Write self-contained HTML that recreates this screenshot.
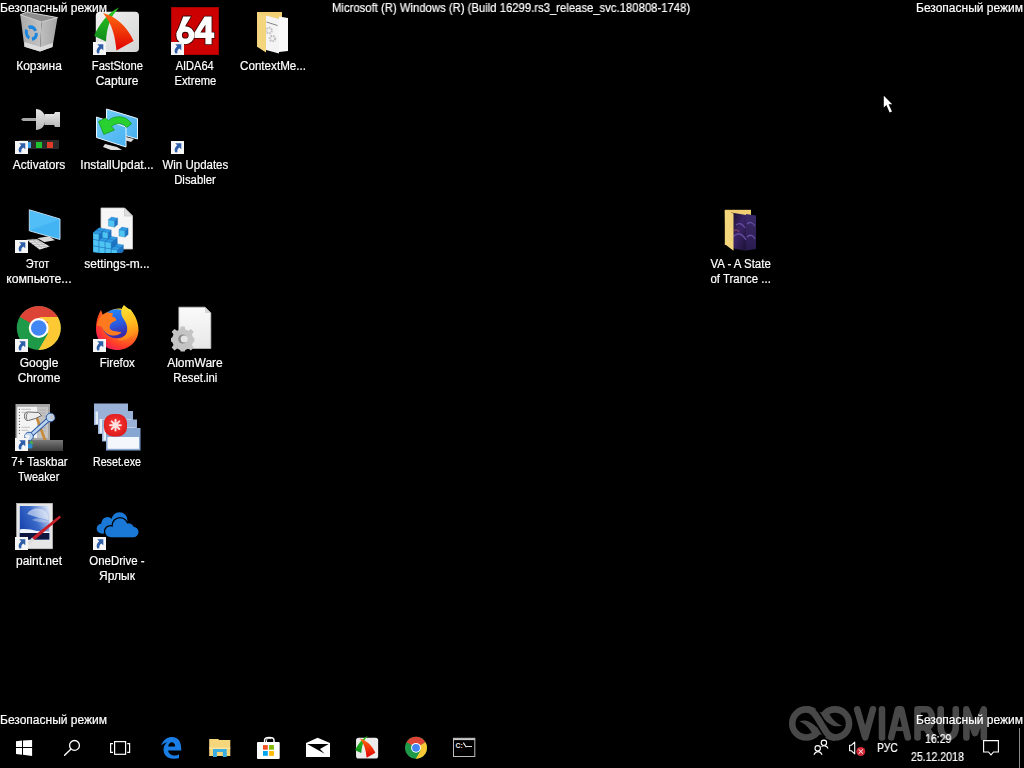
<!DOCTYPE html>
<html><head><meta charset="utf-8">
<style>
html,body{margin:0;padding:0;background:#000;width:1024px;height:768px;overflow:hidden;}
body{position:relative;font-family:"Liberation Sans",sans-serif;font-size:12px;color:#fff;-webkit-font-smoothing:antialiased;}
.t{position:absolute;white-space:pre;line-height:15px;will-change:transform;-webkit-text-stroke:0.2px #fff;}
.lbl{position:absolute;width:76px;text-align:center;line-height:15px;white-space:nowrap;will-change:transform;-webkit-text-stroke:0.2px #fff;}
.ic{position:absolute;width:48px;height:48px;}
.ov{position:absolute;width:13px;height:13px;}
svg{display:block;}
</style></head><body>
<div class="ic" style="left:15px;top:7px"><svg width="48" height="48" viewBox="0 0 48 48">
<defs><linearGradient id="rbL" x1="0" y1="0" x2="1" y2="0"><stop offset="0" stop-color="#a9a9a9"/><stop offset="1" stop-color="#c4c4c4"/></linearGradient>
<linearGradient id="rbR" x1="0" y1="0" x2="1" y2="0"><stop offset="0" stop-color="#c0c0c0"/><stop offset="1" stop-color="#a4a4a4"/></linearGradient></defs>
<polygon points="5.3,7.8 26.5,15 25,44.4 9.4,39.7" fill="url(#rbL)"/>
<polygon points="26.5,15 42.5,10.6 37.5,40 25,44.4" fill="url(#rbR)"/>
<polygon points="9.5,35 25.5,40 37.8,36 37.5,40 25,44.4 9.4,39.7" fill="#dcdcdc"/>
<polygon points="5.3,7.8 12,5 42.5,10.6 26.5,15" fill="#8c8c8c" stroke="#d6d6d6" stroke-width="1"/>
<g transform="translate(16.3,26) rotate(-20) scale(0.9,1.12)"><circle cx="0" cy="0" r="5.4" fill="none" stroke="#1a86e0" stroke-width="3.2" stroke-dasharray="8.5 2.8" transform="rotate(15)"/></g>
</svg></div>
<div class="ic" style="left:93px;top:7px"><svg width="48" height="48" viewBox="0 0 48 48">
<defs><linearGradient id="fsBg" x1="0" y1="0" x2="1" y2="1"><stop offset="0" stop-color="#f2f2f2"/><stop offset="1" stop-color="#d4d4d4"/></linearGradient>
<linearGradient id="fsR" x1="0" y1="0" x2="0" y2="1"><stop offset="0" stop-color="#ff6a10"/><stop offset="1" stop-color="#e00000"/></linearGradient>
<linearGradient id="fsG" x1="0" y1="0" x2="0" y2="1"><stop offset="0" stop-color="#2ecc20"/><stop offset="1" stop-color="#0f8a1c"/></linearGradient></defs>
<rect x="2.8" y="4.7" width="43.2" height="40.3" rx="4" fill="url(#fsBg)"/>
<path d="M26 0.5 C15 6 6 17 1.2 29 L13 34.5 C13.5 24 16 15 20 8 Z" fill="url(#fsG)"/>
<path d="M10 6 C22 9 34 19 40.6 34 L23.5 43.5 C22 30 20 18 10 6 Z" fill="url(#fsR)"/>
</svg></div>
<div class="ov" style="left:93px;top:42px"><svg width="13" height="13" viewBox="0 0 13 13"><rect x="0" y="0" width="13" height="13" fill="#f6f6f6"/><path d="M4.2 2.2 L10.3 2.2 L10.3 8.3 L8.3 6.4 C6.6 7.6 6 9.2 6.4 11.3 L4.6 11.6 C3.1 9.6 3.3 6.9 6.2 4.2 Z" fill="#2e5ea8"/></svg></div>
<div class="ic" style="left:171px;top:7px"><svg width="48" height="48" viewBox="0 0 48 48">
<rect x="0" y="0" width="48" height="48" fill="#cc0000"/>
<rect x="0.5" y="0.5" width="47" height="47" fill="none" stroke="#a80000"/>
<g stroke="#3a0000" stroke-width="1.6" stroke-linejoin="round">
<circle cx="14.3" cy="28.2" r="6.2" fill="none" stroke-width="7.4"/>
<polygon points="12.2,9.4 19.9,9.4 12.8,21.5 5.3,27.5" fill="#3a0000"/>
<path fill="#3a0000" fill-rule="evenodd" d="M33.5 9.6 L40.6 9.6 L40.6 25.5 L43.3 25.5 L43.3 30.9 L40.6 30.9 L40.6 37.2 L34.4 37.2 L34.4 30.9 L23.4 30.9 L23.4 25.7 Z M34.4 17.8 L34.4 25.5 L29.4 25.5 Z"/>
</g>
<circle cx="14.3" cy="28.2" r="6.2" fill="none" stroke="#fff" stroke-width="5.6"/>
<polygon points="12.2,9.4 19.9,9.4 12.8,21.5 5.3,27.5" fill="#fff"/>
<path fill="#fff" fill-rule="evenodd" d="M33.5 9.6 L40.6 9.6 L40.6 25.5 L43.3 25.5 L43.3 30.9 L40.6 30.9 L40.6 37.2 L34.4 37.2 L34.4 30.9 L23.4 30.9 L23.4 25.7 Z M34.4 17.8 L34.4 25.5 L29.4 25.5 Z"/>
</svg></div>
<div class="ov" style="left:171px;top:42px"><svg width="13" height="13" viewBox="0 0 13 13"><rect x="0" y="0" width="13" height="13" fill="#f6f6f6"/><path d="M4.2 2.2 L10.3 2.2 L10.3 8.3 L8.3 6.4 C6.6 7.6 6 9.2 6.4 11.3 L4.6 11.6 C3.1 9.6 3.3 6.9 6.2 4.2 Z" fill="#2e5ea8"/></svg></div>
<div class="ic" style="left:249px;top:7px"><svg width="48" height="48" viewBox="0 0 48 48">
<polygon points="8,5 33,5 33,40 8,40" fill="#f1cf72"/>
<polygon points="17,8.5 30,12 30,46.5 17,43" fill="#f4f4f4"/>
<polygon points="30,9.5 39,11 39,44 30,45" fill="#fafafa"/>
<path d="M17.5 15 L28.5 18.5" stroke="#666" stroke-width="0.8"/>
<circle cx="20" cy="23.5" r="2.8" fill="none" stroke="#c6c6c6" stroke-width="2.2" stroke-dasharray="1.6 0.9"/>
<circle cx="23.5" cy="31.5" r="2.6" fill="none" stroke="#c0c0c0" stroke-width="2.2" stroke-dasharray="1.6 0.9"/>
<polygon points="8,5.5 17,9 17,45.6 8.5,40" fill="#f3d57e"/>
</svg></div>
<div class="ic" style="left:15px;top:106px"><svg width="48" height="48" viewBox="0 0 48 48">
<defs><linearGradient id="pinG" x1="0" y1="0" x2="0" y2="1"><stop offset="0" stop-color="#e6e6e6"/><stop offset="1" stop-color="#b8b8b8"/></linearGradient></defs>
<polygon points="6,13.5 8,12 21,12 21,15 8,15" fill="#a8a8a8"/>
<path d="M21 3 C26 3 30 7 30 12 L30 15 C30 20 26 24 21 24 Z" fill="url(#pinG)"/>
<rect x="29.5" y="8" width="11" height="11" fill="url(#pinG)"/>
<path d="M39 8 L40 6 L45 6 L45 21 L40 21 L39 19 Z" fill="url(#pinG)"/>
<rect x="4" y="34" width="40" height="9" fill="#2a2a2a"/>
<rect x="13" y="36" width="3" height="6" fill="#3aa0e8"/>
<rect x="21" y="36" width="6" height="6" fill="#20c030"/>
<rect x="32" y="36" width="6" height="6" fill="#e03a2a"/>
</svg></div>
<div class="ov" style="left:15px;top:141px"><svg width="13" height="13" viewBox="0 0 13 13"><rect x="0" y="0" width="13" height="13" fill="#f6f6f6"/><path d="M4.2 2.2 L10.3 2.2 L10.3 8.3 L8.3 6.4 C6.6 7.6 6 9.2 6.4 11.3 L4.6 11.6 C3.1 9.6 3.3 6.9 6.2 4.2 Z" fill="#2e5ea8"/></svg></div>
<div class="ic" style="left:93px;top:106px"><svg width="48" height="48" viewBox="0 0 48 48">
<defs><linearGradient id="scrG" x1="0" y1="0" x2="1" y2="1"><stop offset="0" stop-color="#70ccf8"/><stop offset="1" stop-color="#48b0f0"/></linearGradient></defs>
<polygon points="33,31 41,33 38,36 31,34" fill="#d8d8d8"/>
<polygon points="13.5,3 44.5,12.5 44.5,33 13.5,24" fill="url(#scrG)" stroke="#e8f4fc" stroke-width="1"/>
<polygon points="12,38 24,41 29,44 18,44 10,41" fill="#e0e0e0"/>
<polygon points="3.5,11 33,21 33,41 3.5,31.5" fill="url(#scrG)" stroke="#e8f4fc" stroke-width="1"/>
<path d="M38.5 18 C34 9.5 22 8.5 15.5 14.5 L12.5 12 L5.5 15.5 L10.8 28.5 L21.5 24 L18.5 20.5 C23.5 16.5 30 16.5 33.5 21.5 Z" fill="#28d030" stroke="#149020" stroke-width="0.7"/>
</svg></div>
<div class="ov" style="left:171px;top:141px"><svg width="13" height="13" viewBox="0 0 13 13"><rect x="0" y="0" width="13" height="13" fill="#f6f6f6"/><path d="M4.2 2.2 L10.3 2.2 L10.3 8.3 L8.3 6.4 C6.6 7.6 6 9.2 6.4 11.3 L4.6 11.6 C3.1 9.6 3.3 6.9 6.2 4.2 Z" fill="#2e5ea8"/></svg></div>
<div class="ic" style="left:15px;top:205px"><svg width="48" height="48" viewBox="0 0 48 48">
<polygon points="14.3,4.8 45,14 45,34.5 14.3,25.8" fill="#42b4f4" stroke="#cfe8f8" stroke-width="0.9"/>
<polygon points="14.8,5.5 44.5,14.5 14.8,25.3" fill="#5cc4f8" opacity="0.6"/>
<polygon points="21.5,33.2 34,31.3 40,35.2 27,37.6" fill="#d8d8d8"/>
<polygon points="10,34.2 22,33.6 36,41.5 24.5,45.2" fill="#e4e4e4" stroke="#000" stroke-width="1.1"/>
<path d="M12 35.5 L24 35 M14.5 37.5 L27 37 M17.5 39.5 L30 39.5 M20.5 41.5 L32.5 41.8 M17 34 L28 44 M21 34 L32 43" stroke="#a8a8a8" stroke-width="0.6"/>
</svg></div>
<div class="ov" style="left:15px;top:240px"><svg width="13" height="13" viewBox="0 0 13 13"><rect x="0" y="0" width="13" height="13" fill="#f6f6f6"/><path d="M4.2 2.2 L10.3 2.2 L10.3 8.3 L8.3 6.4 C6.6 7.6 6 9.2 6.4 11.3 L4.6 11.6 C3.1 9.6 3.3 6.9 6.2 4.2 Z" fill="#2e5ea8"/></svg></div>
<div class="ic" style="left:93px;top:205px"><svg width="48" height="48" viewBox="0 0 48 48">
<path d="M8 3 L31.5 3 L39.5 11 L39.5 44 L8 44 Z" fill="#f6f6f6" stroke="#cfcfcf" stroke-width="0.8"/>
<path d="M31.5 3 L31.5 11 L39.5 11 Z" fill="#dedede" stroke="#bdbdbd" stroke-width="0.6"/>
<polygon points="3.00,44.50 9.10,45.60 9.10,39.20 3.00,38.10" fill="#4ec4f2" stroke="#1a6ab8" stroke-width="0.35"/><polygon points="9.10,45.60 12.10,43.10 12.10,36.70 9.10,39.20" fill="#1c74c4" stroke="#1a6ab8" stroke-width="0.35"/><polygon points="3.00,38.10 9.10,39.20 12.10,36.70 6.00,35.60" fill="#2e9ce4" stroke="#1a6ab8" stroke-width="0.35"/>
<polygon points="3.00,38.10 9.10,39.20 9.10,32.80 3.00,31.70" fill="#4ec4f2" stroke="#1a6ab8" stroke-width="0.35"/><polygon points="9.10,39.20 12.10,36.70 12.10,30.30 9.10,32.80" fill="#1c74c4" stroke="#1a6ab8" stroke-width="0.35"/><polygon points="3.00,31.70 9.10,32.80 12.10,30.30 6.00,29.20" fill="#2e9ce4" stroke="#1a6ab8" stroke-width="0.35"/>
<polygon points="3.00,31.70 9.10,32.80 9.10,26.40 3.00,25.30" fill="#4ec4f2" stroke="#1a6ab8" stroke-width="0.35"/><polygon points="9.10,32.80 12.10,30.30 12.10,23.90 9.10,26.40" fill="#1c74c4" stroke="#1a6ab8" stroke-width="0.35"/><polygon points="3.00,25.30 9.10,26.40 12.10,23.90 6.00,22.80" fill="#2e9ce4" stroke="#1a6ab8" stroke-width="0.35"/>
<polygon points="9.10,45.60 15.20,46.70 15.20,40.30 9.10,39.20" fill="#4ec4f2" stroke="#1a6ab8" stroke-width="0.35"/><polygon points="15.20,46.70 18.20,44.20 18.20,37.80 15.20,40.30" fill="#1c74c4" stroke="#1a6ab8" stroke-width="0.35"/><polygon points="9.10,39.20 15.20,40.30 18.20,37.80 12.10,36.70" fill="#2e9ce4" stroke="#1a6ab8" stroke-width="0.35"/>
<polygon points="9.10,39.20 15.20,40.30 15.20,33.90 9.10,32.80" fill="#4ec4f2" stroke="#1a6ab8" stroke-width="0.35"/><polygon points="15.20,40.30 18.20,37.80 18.20,31.40 15.20,33.90" fill="#1c74c4" stroke="#1a6ab8" stroke-width="0.35"/><polygon points="9.10,32.80 15.20,33.90 18.20,31.40 12.10,30.30" fill="#2e9ce4" stroke="#1a6ab8" stroke-width="0.35"/>
<polygon points="9.10,32.80 15.20,33.90 15.20,27.50 9.10,26.40" fill="#4ec4f2" stroke="#1a6ab8" stroke-width="0.35"/><polygon points="15.20,33.90 18.20,31.40 18.20,25.00 15.20,27.50" fill="#1c74c4" stroke="#1a6ab8" stroke-width="0.35"/><polygon points="9.10,26.40 15.20,27.50 18.20,25.00 12.10,23.90" fill="#2e9ce4" stroke="#1a6ab8" stroke-width="0.35"/>
<polygon points="15.20,46.70 21.30,47.80 21.30,41.40 15.20,40.30" fill="#4ec4f2" stroke="#1a6ab8" stroke-width="0.35"/><polygon points="21.30,47.80 24.30,45.30 24.30,38.90 21.30,41.40" fill="#1c74c4" stroke="#1a6ab8" stroke-width="0.35"/><polygon points="15.20,40.30 21.30,41.40 24.30,38.90 18.20,37.80" fill="#2e9ce4" stroke="#1a6ab8" stroke-width="0.35"/>
<polygon points="15.20,40.30 21.30,41.40 21.30,35.00 15.20,33.90" fill="#4ec4f2" stroke="#1a6ab8" stroke-width="0.35"/><polygon points="21.30,41.40 24.30,38.90 24.30,32.50 21.30,35.00" fill="#1c74c4" stroke="#1a6ab8" stroke-width="0.35"/><polygon points="15.20,33.90 21.30,35.00 24.30,32.50 18.20,31.40" fill="#2e9ce4" stroke="#1a6ab8" stroke-width="0.35"/>
<polygon points="21.30,47.80 27.40,48.90 27.40,42.50 21.30,41.40" fill="#4ec4f2" stroke="#1a6ab8" stroke-width="0.35"/><polygon points="27.40,48.90 30.40,46.40 30.40,40.00 27.40,42.50" fill="#1c74c4" stroke="#1a6ab8" stroke-width="0.35"/><polygon points="21.30,41.40 27.40,42.50 30.40,40.00 24.30,38.90" fill="#2e9ce4" stroke="#1a6ab8" stroke-width="0.35"/>
<polygon points="0.00,47.00 6.10,48.10 6.10,41.70 0.00,40.60" fill="#4ec4f2" stroke="#1a6ab8" stroke-width="0.35"/><polygon points="6.10,48.10 9.10,45.60 9.10,39.20 6.10,41.70" fill="#1c74c4" stroke="#1a6ab8" stroke-width="0.35"/><polygon points="0.00,40.60 6.10,41.70 9.10,39.20 3.00,38.10" fill="#2e9ce4" stroke="#1a6ab8" stroke-width="0.35"/>
<polygon points="0.00,40.60 6.10,41.70 6.10,35.30 0.00,34.20" fill="#4ec4f2" stroke="#1a6ab8" stroke-width="0.35"/><polygon points="6.10,41.70 9.10,39.20 9.10,32.80 6.10,35.30" fill="#1c74c4" stroke="#1a6ab8" stroke-width="0.35"/><polygon points="0.00,34.20 6.10,35.30 9.10,32.80 3.00,31.70" fill="#2e9ce4" stroke="#1a6ab8" stroke-width="0.35"/>
<polygon points="0.00,34.20 6.10,35.30 6.10,28.90 0.00,27.80" fill="#4ec4f2" stroke="#1a6ab8" stroke-width="0.35"/><polygon points="6.10,35.30 9.10,32.80 9.10,26.40 6.10,28.90" fill="#1c74c4" stroke="#1a6ab8" stroke-width="0.35"/><polygon points="0.00,27.80 6.10,28.90 9.10,26.40 3.00,25.30" fill="#2e9ce4" stroke="#1a6ab8" stroke-width="0.35"/>
<polygon points="6.10,48.10 12.20,49.20 12.20,42.80 6.10,41.70" fill="#4ec4f2" stroke="#1a6ab8" stroke-width="0.35"/><polygon points="12.20,49.20 15.20,46.70 15.20,40.30 12.20,42.80" fill="#1c74c4" stroke="#1a6ab8" stroke-width="0.35"/><polygon points="6.10,41.70 12.20,42.80 15.20,40.30 9.10,39.20" fill="#2e9ce4" stroke="#1a6ab8" stroke-width="0.35"/>
<polygon points="6.10,41.70 12.20,42.80 12.20,36.40 6.10,35.30" fill="#4ec4f2" stroke="#1a6ab8" stroke-width="0.35"/><polygon points="12.20,42.80 15.20,40.30 15.20,33.90 12.20,36.40" fill="#1c74c4" stroke="#1a6ab8" stroke-width="0.35"/><polygon points="6.10,35.30 12.20,36.40 15.20,33.90 9.10,32.80" fill="#2e9ce4" stroke="#1a6ab8" stroke-width="0.35"/>
<polygon points="12.20,49.20 18.30,50.30 18.30,43.90 12.20,42.80" fill="#4ec4f2" stroke="#1a6ab8" stroke-width="0.35"/><polygon points="18.30,50.30 21.30,47.80 21.30,41.40 18.30,43.90" fill="#1c74c4" stroke="#1a6ab8" stroke-width="0.35"/><polygon points="12.20,42.80 18.30,43.90 21.30,41.40 15.20,40.30" fill="#2e9ce4" stroke="#1a6ab8" stroke-width="0.35"/>
<polygon points="12.20,42.80 18.30,43.90 18.30,37.50 12.20,36.40" fill="#4ec4f2" stroke="#1a6ab8" stroke-width="0.35"/><polygon points="18.30,43.90 21.30,41.40 21.30,35.00 18.30,37.50" fill="#1c74c4" stroke="#1a6ab8" stroke-width="0.35"/><polygon points="12.20,36.40 18.30,37.50 21.30,35.00 15.20,33.90" fill="#2e9ce4" stroke="#1a6ab8" stroke-width="0.35"/>
<polygon points="18.30,50.30 24.40,51.40 24.40,45.00 18.30,43.90" fill="#4ec4f2" stroke="#1a6ab8" stroke-width="0.35"/><polygon points="24.40,51.40 27.40,48.90 27.40,42.50 24.40,45.00" fill="#1c74c4" stroke="#1a6ab8" stroke-width="0.35"/><polygon points="18.30,43.90 24.40,45.00 27.40,42.50 21.30,41.40" fill="#2e9ce4" stroke="#1a6ab8" stroke-width="0.35"/>
<polygon points="15.50,21.00 21.60,22.10 21.60,15.70 15.50,14.60" fill="#4ec4f2" stroke="#1a6ab8" stroke-width="0.35"/><polygon points="21.60,22.10 24.60,19.60 24.60,13.20 21.60,15.70" fill="#1c74c4" stroke="#1a6ab8" stroke-width="0.35"/><polygon points="15.50,14.60 21.60,15.70 24.60,13.20 18.50,12.10" fill="#2e9ce4" stroke="#1a6ab8" stroke-width="0.35"/>
<polygon points="26.00,31.00 32.10,32.10 32.10,25.70 26.00,24.60" fill="#4ec4f2" stroke="#1a6ab8" stroke-width="0.35"/><polygon points="32.10,32.10 35.10,29.60 35.10,23.20 32.10,25.70" fill="#1c74c4" stroke="#1a6ab8" stroke-width="0.35"/><polygon points="26.00,24.60 32.10,25.70 35.10,23.20 29.00,22.10" fill="#2e9ce4" stroke="#1a6ab8" stroke-width="0.35"/>

</svg></div>
<div class="ic" style="left:717px;top:205px"><svg width="48" height="48" viewBox="0 0 48 48">
<defs><linearGradient id="vaG" x1="0" y1="0" x2="1" y2="1"><stop offset="0" stop-color="#1a1028"/><stop offset="0.5" stop-color="#3a2468"/><stop offset="1" stop-color="#1c1234"/></linearGradient>
<linearGradient id="vaG2" x1="0" y1="0" x2="0" y2="1"><stop offset="0" stop-color="#3a2a68"/><stop offset="1" stop-color="#2a1c50"/></linearGradient></defs>
<polygon points="7.8,4.8 34,4.8 34,40 7.8,40" fill="#f1cf72"/>
<polygon points="14,7.5 29,10 29,46 14,43" fill="url(#vaG)"/>
<polygon points="29,9 39,10.5 39,44 29,45.5" fill="url(#vaG2)"/>
<path d="M16 32 C20 27 25 28 29 35 M19 20 C22 17 26 19 28 23 M30 19 C33 16 36 18 38 21 M30 32 C33 29 36 30 38 34" stroke="#7a60c0" stroke-width="1.3" fill="none" opacity="0.7"/>
<path d="M17 26 C19 24 21 25 22 27" stroke="#b05a6a" stroke-width="1.2" fill="none" opacity="0.6"/>
<polygon points="7.8,5.2 16.5,8.5 16.5,45.8 8.3,39.5" fill="#f3d57e"/>
</svg></div>
<div class="ic" style="left:15px;top:304px"><svg width="48" height="48" viewBox="0 0 48 48">
<circle cx="23.75" cy="24" r="22" fill="#1e9a48"/>
<path d="M23.75 24 L4.7 13 A22 22 0 0 1 42.8 13 Z" fill="#db4437"/>
<path d="M23.75 24 L42.8 13 A22 22 0 0 1 23.75 46 Z" fill="#fcc934"/>
<path d="M23.75 13 L42.8 13 L42.8 24 Z" fill="#fcc934"/>
<path d="M23.75 24 L14.2 29.5 L4.7 13 Z" fill="#1e9a48"/>
<path d="M14.2 29.5 L23.75 46 L33.3 29.5 Z" fill="#1e9a48"/>
<path d="M33.3 29.5 L23.75 46 L42.8 35 Z" fill="#fcc934"/>
<circle cx="23.75" cy="24" r="10" fill="#fff"/>
<circle cx="23.75" cy="24" r="7.8" fill="#4285f4"/>
</svg></div>
<div class="ov" style="left:15px;top:339px"><svg width="13" height="13" viewBox="0 0 13 13"><rect x="0" y="0" width="13" height="13" fill="#f6f6f6"/><path d="M4.2 2.2 L10.3 2.2 L10.3 8.3 L8.3 6.4 C6.6 7.6 6 9.2 6.4 11.3 L4.6 11.6 C3.1 9.6 3.3 6.9 6.2 4.2 Z" fill="#2e5ea8"/></svg></div>
<div class="ic" style="left:93px;top:304px"><svg width="48" height="48" viewBox="0 0 48 48">
<defs><radialGradient id="ffO" cx="0.78" cy="0.15" r="1.0"><stop offset="0" stop-color="#fff23a"/><stop offset="0.3" stop-color="#ffc21a"/><stop offset="0.55" stop-color="#ff7a1a"/><stop offset="0.8" stop-color="#ff3a2a"/><stop offset="1" stop-color="#e8186a"/></radialGradient>
<linearGradient id="ffB" x1="0" y1="0" x2="0.3" y2="1"><stop offset="0" stop-color="#1e90ff"/><stop offset="0.6" stop-color="#2a5ae0"/><stop offset="1" stop-color="#3a2aa8"/></linearGradient>
<linearGradient id="ffT" x1="0" y1="0" x2="0.2" y2="1"><stop offset="0" stop-color="#ffe83a"/><stop offset="0.55" stop-color="#ffc020"/><stop offset="1" stop-color="#ff8a1a"/></linearGradient></defs>
<path d="M31 1.2 C33.5 3.5 35.5 5 37.5 5.5 C42 11 45.5 18 45.5 26 C45.5 37 36 46 24.5 46 C12 46 3 37 3 25 C3 17 5 11 8 6 L10 11.5 C12 9 14 8 16 7.5 C20 5 25 4 29 5 C29.5 3.5 30 2 31 1.2 Z" fill="url(#ffO)"/>
<circle cx="23.5" cy="19.8" r="14.5" fill="url(#ffB)"/>
<path d="M31 1.2 C27.5 5 27.5 10 30 14 C33 18.5 35 22 34 27.5 C33 32 29 35 24.5 36 C33 37.5 42 32 43.5 24 C44 16 40 9 37.5 5.5 L37.5 8 C35.5 6 33 3.5 31 1.2 Z" fill="url(#ffT)"/>
<path d="M4 20 C6 14 9 10.5 12.5 9 C15 8.5 17.5 8.5 20 9.3 C19.5 10.8 19 12.2 19.5 13 C21.5 13 23.5 14.5 23 16.5 C21.5 17.5 19.5 18 18.5 19 C16.5 21 16 23.5 17.5 25.5 C20 27.5 24.5 27.5 28.5 28 C27 30.5 23.5 32 19.5 31.5 C15 31 11 28 9 23 C7.5 22 5.5 21.5 4 22 Z" fill="#ff7a1e"/>
</svg></div>
<div class="ov" style="left:93px;top:339px"><svg width="13" height="13" viewBox="0 0 13 13"><rect x="0" y="0" width="13" height="13" fill="#f6f6f6"/><path d="M4.2 2.2 L10.3 2.2 L10.3 8.3 L8.3 6.4 C6.6 7.6 6 9.2 6.4 11.3 L4.6 11.6 C3.1 9.6 3.3 6.9 6.2 4.2 Z" fill="#2e5ea8"/></svg></div>
<div class="ic" style="left:171px;top:304px"><svg width="48" height="48" viewBox="0 0 48 48">
<defs><linearGradient id="docG" x1="0" y1="0" x2="0" y2="1"><stop offset="0" stop-color="#fafafa"/><stop offset="1" stop-color="#e8e8e8"/></linearGradient></defs>
<path d="M7.9 3.2 L34 3.2 L39.8 9 L39.8 44.4 L7.9 44.4 Z" fill="url(#docG)" stroke="#c8c8c8" stroke-width="0.8"/>
<path d="M34 3.2 L34 9 L39.8 9 Z" fill="#d6d6d6"/>
<g transform="translate(11.7,34)">
<path d="M-2 -11.5 L2 -11.5 L2.6 -8.5 L5.6 -7.2 L8.2 -9 L11 -6.2 L9.2 -3.6 L10.5 -0.6 L11.7 0 L11.7 3.5 L10.5 4 L9.2 7 L11 9.6 L8.2 12.4 L5.6 10.6 L2.6 11.9 L2 13.4 L-2 13.4 L-2.6 11.9 L-5.6 10.6 L-8.2 12.4 L-11 9.6 L-9.2 7 L-10.5 4 L-11.7 3.5 L-11.7 0 L-10.5 -0.6 L-9.2 -3.6 L-11 -6.2 L-8.2 -9 L-5.6 -7.2 L-2.6 -8.5 Z" fill="#c4c4c4"/>
<circle cx="0" cy="1" r="4.5" fill="#8a8a8a"/>
<circle cx="1.5" cy="1" r="3.5" fill="#e4e4e4"/>
</g>
</svg></div>
<div class="ic" style="left:15px;top:403px"><svg width="48" height="48" viewBox="0 0 48 48">
<defs><linearGradient id="tbG" x1="0" y1="0" x2="0" y2="1"><stop offset="0" stop-color="#7a7a7a"/><stop offset="1" stop-color="#3a3a3a"/></linearGradient></defs>
<rect x="0.5" y="1" width="34.5" height="36" fill="#a4a4a4"/>
<rect x="2.2" y="3.8" width="19.8" height="31.2" fill="#f4f4f4"/>
<rect x="22" y="3.8" width="11" height="31.2" fill="#c4c4c4"/>
<g fill="#222"><circle cx="4.4" cy="6.3" r="0.5"/><circle cx="4.4" cy="9.3" r="0.5"/><circle cx="4.4" cy="12.3" r="0.5"/><circle cx="4.4" cy="15.3" r="0.55"/><circle cx="4.4" cy="18.3" r="0.55"/><circle cx="4.4" cy="21.3" r="0.55"/><circle cx="4.4" cy="24.3" r="0.55"/><circle cx="4.4" cy="27.3" r="0.55"/><circle cx="4.4" cy="30.3" r="0.55"/></g>
<path d="M6.5 6.3 L16 6.3 M6.5 9.3 L14 9.3 M6.5 24.3 L15 24.3 M6.5 27.3 L13 27.3 M24 7 L31 7 M24 10 L31 10 M24 13 L31 13 M24 25 L31 25 M24 28 L31 28" stroke="#aaa" stroke-width="0.7"/>
<path d="M21.5 14 L30 37" stroke="#c88a38" stroke-width="2.6"/>
<path d="M9.5 12.5 C9.5 10 11 9 13.5 9 L23.5 9.5 L26.5 12.5 L20.5 15.5 L13.5 17.5 C11 18 9.5 16 9.5 13.5 Z" fill="#ececec" stroke="#5a5a5a" stroke-width="0.9"/>
<path d="M12 16.5 C11 15 11 11.5 12.5 10" stroke="#5a5a5a" stroke-width="0.8" fill="none"/>
<rect x="13" y="37" width="35" height="11" fill="url(#tbG)"/>
<circle cx="15" cy="43" r="2.6" fill="#2a8ad0"/>
<path d="M15.5 38 L17.5 41" stroke="#3ac040" stroke-width="1.5"/>
<path d="M15 33 L34.5 15.5" stroke="#2a56a0" stroke-width="4.6" stroke-linecap="round"/>
<path d="M15 33 L34.5 15.5" stroke="#bcd6f2" stroke-width="2.6" stroke-linecap="round"/>
<circle cx="14" cy="33.5" r="4.3" fill="#bcd6f2" stroke="#2a56a0" stroke-width="1"/>
<circle cx="35.5" cy="14.5" r="4.3" fill="#bcd6f2" stroke="#2a56a0" stroke-width="1"/>
<path d="M10 32.5 L13.5 33.5 L12 37" stroke="#f4f4f4" stroke-width="2.2" fill="none"/>
<path d="M39.5 15.5 L36 14.5 L37.5 11" stroke="#c4c4c4" stroke-width="2.2" fill="none"/>
</svg></div>
<div class="ov" style="left:15px;top:438px"><svg width="13" height="13" viewBox="0 0 13 13"><rect x="0" y="0" width="13" height="13" fill="#f6f6f6"/><path d="M4.2 2.2 L10.3 2.2 L10.3 8.3 L8.3 6.4 C6.6 7.6 6 9.2 6.4 11.3 L4.6 11.6 C3.1 9.6 3.3 6.9 6.2 4.2 Z" fill="#2e5ea8"/></svg></div>
<div class="ic" style="left:93px;top:403px"><svg width="48" height="48" viewBox="0 0 48 48">
<defs><radialGradient id="rsR" cx="0.5" cy="0.45" r="0.6"><stop offset="0" stop-color="#ff3a3a"/><stop offset="1" stop-color="#d81818"/></radialGradient></defs>
<rect x="1" y="0.5" width="34" height="21.5" fill="#9ab2d8"/>
<rect x="2.5" y="8.5" width="31" height="12.5" fill="#e4ecf6"/>
<rect x="5" y="8" width="35" height="23" fill="#9ab2d8"/>
<rect x="6.5" y="16" width="32" height="14" fill="#e4ecf6"/>
<rect x="9" y="16.5" width="35" height="22" fill="#9ab2d8"/>
<rect x="10.5" y="24.5" width="32" height="13" fill="#e4ecf6"/>
<rect x="13" y="25" width="34.5" height="22.5" fill="#88a6d2"/>
<rect x="14.5" y="34" width="31.5" height="11.8" fill="#f4f8fc"/>
<rect x="11" y="11" width="23" height="22.5" rx="9" fill="url(#rsR)"/>
<g stroke="#fff" stroke-width="2" opacity="0.85" stroke-linecap="round">
<path d="M22.5 16.8 L22.5 27.6 M17.1 22.2 L27.9 22.2 M18.7 18.4 L26.3 26 M26.3 18.4 L18.7 26"/>
</g>
</svg></div>
<div class="ic" style="left:15px;top:502px"><svg width="48" height="48" viewBox="0 0 48 48">
<defs><linearGradient id="skyG" x1="0" y1="0.6" x2="1" y2="0.1"><stop offset="0" stop-color="#1a46b0"/><stop offset="0.5" stop-color="#3a6ac8"/><stop offset="1" stop-color="#dfe8f8"/></linearGradient></defs>
<rect x="1.6" y="1.3" width="36" height="45.5" fill="#e6e6e6" stroke="#c4c4c4" stroke-width="0.6"/>
<rect x="4.8" y="4" width="29.5" height="33.5" fill="url(#skyG)"/>
<path d="M12 12 C16 6 24 5 30 9 C33 12 34 16 33.5 18 C28 17 20 15 12 12 Z" fill="#f0f4fc" opacity="0.55"/>
<path d="M17 18 C22 15 28 17 33 20 C27 21 22 20 17 18 Z" fill="#ffffff" opacity="0.35"/>
<path d="M4.8 27.5 C10 26.5 16 27.5 22 29 L34.3 29.5 L34.3 31.5 L4.8 31.5 Z" fill="#eef2fa"/>
<rect x="4.8" y="31" width="29.5" height="6.5" fill="#0e1640"/>
<path d="M44.6 13.6 L46 15.6 L19.5 38 L17 35.5 Z" fill="#c8202a"/>
<path d="M17 35.5 L19.5 38 L15.5 41.5 L12.5 43 L13.8 39.5 Z" fill="#dcdcdc"/>
</svg></div>
<div class="ov" style="left:15px;top:537px"><svg width="13" height="13" viewBox="0 0 13 13"><rect x="0" y="0" width="13" height="13" fill="#f6f6f6"/><path d="M4.2 2.2 L10.3 2.2 L10.3 8.3 L8.3 6.4 C6.6 7.6 6 9.2 6.4 11.3 L4.6 11.6 C3.1 9.6 3.3 6.9 6.2 4.2 Z" fill="#2e5ea8"/></svg></div>
<div class="ic" style="left:93px;top:502px"><svg width="48" height="48" viewBox="0 0 48 48">
<g fill="#1a78d6">
<circle cx="8.6" cy="26.6" r="4.9"/><circle cx="14.5" cy="21" r="6"/><circle cx="26.5" cy="18.2" r="7.9"/>
<rect x="8.6" y="20" width="20" height="11.5"/>
</g>
<g fill="#000" stroke="#000" stroke-width="2.6">
<circle cx="17.6" cy="29.6" r="5.4"/><circle cx="27" cy="23.6" r="7.3"/><circle cx="35.5" cy="26.5" r="5.3"/><circle cx="40.2" cy="30" r="5.3"/>
<rect x="17.6" y="28" width="22.6" height="7.3"/>
</g>
<g fill="#1a78d6">
<circle cx="17.6" cy="29.6" r="5.4"/><circle cx="27" cy="23.6" r="7.3"/><circle cx="35.5" cy="26.5" r="5.3"/><circle cx="40.2" cy="30" r="5.3"/>
<rect x="17.6" y="28" width="22.6" height="7.3"/>
</g>
</svg></div>
<div class="ov" style="left:93px;top:537px"><svg width="13" height="13" viewBox="0 0 13 13"><rect x="0" y="0" width="13" height="13" fill="#f6f6f6"/><path d="M4.2 2.2 L10.3 2.2 L10.3 8.3 L8.3 6.4 C6.6 7.6 6 9.2 6.4 11.3 L4.6 11.6 C3.1 9.6 3.3 6.9 6.2 4.2 Z" fill="#2e5ea8"/></svg></div>
<div class="lbl" style="left:1px;top:59px">Корзина</div>
<div class="lbl" style="left:79px;top:59px"><span style="display:inline-block;transform:scaleX(0.935)">FastStone</span><br>Capture</div>
<div class="lbl" style="left:157px;top:59px"><span style="display:inline-block;transform:scaleX(0.92)">AIDA64</span><br><span style="display:inline-block;transform:scaleX(0.934)">Extreme</span></div>
<div class="lbl" style="left:235px;top:59px"><span style="display:inline-block;transform:scaleX(0.97)">ContextMe...</span></div>
<div class="lbl" style="left:1px;top:158px">Activators</div>
<div class="lbl" style="left:79px;top:158px">InstallUpdat...</div>
<div class="lbl" style="left:157px;top:158px"><span style="display:inline-block;transform:scaleX(0.958)">Win Updates</span><br><span style="display:inline-block;transform:scaleX(0.948)">Disabler</span></div>
<div class="lbl" style="left:1px;top:257px"><span style="display:inline-block;transform:translateX(-1.5px) scaleX(0.9)">Этот</span><br><span style="display:inline-block;transform:scaleX(1.024)">компьюте...</span></div>
<div class="lbl" style="left:79px;top:257px">settings-m...</div>
<div class="lbl" style="left:703px;top:257px"><span style="display:inline-block;transform:scaleX(0.956)">VA - A State</span><br><span style="display:inline-block;transform:scaleX(0.952)">of Trance ...</span></div>
<div class="lbl" style="left:1px;top:356px">Google<br>Chrome</div>
<div class="lbl" style="left:79px;top:356px"><span style="display:inline-block;transform:scaleX(0.955)">Firefox</span></div>
<div class="lbl" style="left:157px;top:356px">AlomWare<br><span style="display:inline-block;transform:scaleX(0.943)">Reset.ini</span></div>
<div class="lbl" style="left:1px;top:455px"><span style="display:inline-block;transform:scaleX(0.96)">7+ Taskbar</span><br><span style="display:inline-block;transform:scaleX(0.91)">Tweaker</span></div>
<div class="lbl" style="left:79px;top:455px"><span style="display:inline-block;transform:scaleX(0.89)">Reset.exe</span></div>
<div class="lbl" style="left:1px;top:554px">paint.net</div>
<div class="lbl" style="left:79px;top:554px"><span style="display:inline-block;transform:scaleX(0.953)">OneDrive -</span><br>Ярлык</div>
<div class="t" style="left:0;top:1px">Безопасный режим</div>
<div class="t" style="left:332px;top:1px;transform:scaleX(0.942);transform-origin:0 0">Microsoft (R) Windows (R) (Build 16299.rs3_release_svc.180808-1748)</div>
<div class="t" style="left:916px;top:1px">Безопасный режим</div>
<svg style="position:absolute;left:0;top:0" width="1024" height="768" viewBox="0 0 1024 768">
<!-- watermark -->
<g fill="none" stroke="#484848" stroke-width="6.6" stroke-linecap="round" stroke-linejoin="round">
<path d="M857.2 709.3 L865.2 737.4 L872.9 709.3"/>
<path d="M882 709.3 L882 737.4"/>
<path d="M891.2 737.4 L898 709.3 L901.2 709.3 L907.8 737.4" stroke-linejoin="round"/><path d="M894 728.9 L905 728.9" stroke-width="4.4" stroke-linecap="butt"/>
<path d="M917.5 737.4 L917.5 709.3 L926 709.3 C934 709.3 934 727.5 926 727.5 L917.5 727.5 M926 727.5 L932.2 737.4"/>
<path d="M940.7 709.3 L940.7 727 C940.7 740.5 955.8 740.5 955.8 727 L955.8 709.3"/>
<path d="M966.4 737.4 L966.4 709.3 L975 733 L983.8 709.3 L983.8 737.4"/>
</g>
<g fill="none" stroke="#484848" stroke-width="6.6">
<circle cx="806.3" cy="723.45" r="14.05"/>
<circle cx="835" cy="723.45" r="14.05"/>
</g>
<path d="M799.1 721.4 C801.5 720.6 803.5 720.4 805.2 720.6 C808 721 811 722.5 815 725.5 L822 735 L812 733 C810 729.5 807.5 726.5 804.2 724 C802.5 722.8 800.8 722 799.1 721.4 Z" fill="#484848"/>
<path d="M842.2 725.5 C839.8 726.3 837.8 726.5 836.1 726.3 C833.3 725.9 830.3 724.4 826.3 721.4 L819.3 711.9 L829.3 713.9 C831.3 717.4 833.8 720.4 837.1 722.9 C838.8 724.1 840.5 724.9 842.2 725.5 Z" fill="#484848"/>
<path d="M806.3 709.4 C813 709.4 816 715.5 820.9 723.45 C825.8 731.4 828.3 737.5 835 737.5" pathLength="100" stroke-dasharray="0 18 64 1000" fill="none" stroke="#000" stroke-width="10.2"/>
<path d="M806.3 709.4 C813 709.4 816 715.5 820.9 723.45 C825.8 731.4 828.3 737.5 835 737.5" fill="none" stroke="#484848" stroke-width="6.8"/>
<!-- cursor -->
<path d="M883.8 95.8 L892.2 104.2 L888.6 104.2 L892 111.6 L889.6 112.6 L886.4 105 L883.8 107.6 Z" fill="#fff"/>
<!-- start -->
<g fill="#fff">
<polygon points="16,741.3 22,740.6 22,747 16,747"/>
<polygon points="23,740.5 32.1,739.9 32.1,747 23,747"/>
<polygon points="16,748 22,748 22,754.7 16,754"/>
<polygon points="23,748 32.1,748 32.1,756.1 23,754.8"/>
</g>
<!-- search -->
<circle cx="74.5" cy="745.4" r="4.9" fill="none" stroke="#fff" stroke-width="1.3"/>
<path d="M70.8 749.2 L64.6 755.3" stroke="#fff" stroke-width="1.4" stroke-linecap="round"/>
<!-- task view -->
<rect x="114.6" y="741.6" width="11" height="12.7" fill="none" stroke="#fff" stroke-width="1.2"/>
<path d="M113 743.6 L110.6 743.6 L110.6 752.3 L113 752.3 M127.2 743.6 L129.6 743.6 L129.6 752.3 L127.2 752.3" fill="none" stroke="#fff" stroke-width="1.2"/>
<!-- edge -->
<path fill="#1a7ee6" fill-rule="evenodd" d="M161.2 745.5 C163 739.5 168 737 172 737 C178.5 737 181.5 742 181.3 750.5 L168.2 750.5 C168.5 754 171.5 755.5 174.5 755.5 C176.5 755.5 178 755 179 754.2 L179 758 C177.5 758.6 175.5 758.8 173.5 758.8 C167 758.8 163.5 754.5 163.5 749.5 C163.5 746 165.5 743.3 167.5 742 C165 743 162.5 744 161.2 745.5 Z M168.2 746.5 L175.2 746.5 C175.2 744 173.5 742.3 171.8 742.3 C170 742.3 168.5 744 168.2 746.5 Z"/>
<!-- explorer -->
<path d="M209.2 738.9 L218 738.9 L219.5 740 L230.3 740 L230.3 756 L209.2 756 Z" fill="#f6d67a"/>
<rect x="209.2" y="747.6" width="21.1" height="1.3" fill="#fbe8a8"/>
<path d="M213 757 L213 748.9 L226.7 748.9 L226.7 757 L222.8 757 L222.8 752 L216.9 752 L216.9 757 Z" fill="#3aaee0"/>
<!-- store -->
<path d="M264.6 742.5 L264.6 740 C264.6 736.5 274 736.5 274 740 L274 742.5" fill="none" stroke="#fff" stroke-width="1.5"/>
<path d="M266.5 742 L266.5 740.5 C266.5 738 270 738 271 739" fill="none" stroke="#fff" stroke-width="1"/>
<rect x="257" y="742" width="22.7" height="16.9" rx="1" fill="#fff"/>
<rect x="263" y="745.1" width="4.8" height="4.6" fill="#f25022"/>
<rect x="269.1" y="745.1" width="4.8" height="4.6" fill="#7fba00"/>
<rect x="263" y="751" width="4.8" height="4.8" fill="#00a4ef"/>
<rect x="269.1" y="751" width="4.8" height="4.8" fill="#ffb900"/>
<!-- mail -->
<path d="M306 743 L317.6 737.8 L330 743 L330 757 L306 757 Z" fill="#fff"/>
<path d="M307.2 744.1 L328.7 744.1 L320 749 L324.7 753.7 Z" fill="#000"/>
<!-- faststone -->
<defs><linearGradient id="tfsR" x1="0" y1="0" x2="0" y2="1"><stop offset="0" stop-color="#ff6a10"/><stop offset="1" stop-color="#e00000"/></linearGradient>
<linearGradient id="tfsG" x1="0" y1="0" x2="0" y2="1"><stop offset="0" stop-color="#2ecc20"/><stop offset="1" stop-color="#0f8a1c"/></linearGradient></defs>
<g transform="translate(354.6,735.4) scale(0.512)">
<rect x="2.8" y="4.7" width="43.2" height="40.3" rx="5" fill="#ececec"/>
<path d="M26 0.5 C15 6 6 17 1.2 29 L13 34.5 C13.5 24 16 15 20 8 Z" fill="url(#tfsG)"/>
<path d="M10 6 C22 9 34 19 40.6 34 L23.5 43.5 C22 30 20 18 10 6 Z" fill="url(#tfsR)"/>
</g>
<!-- chrome -->
<circle cx="416" cy="747.8" r="11" fill="#1e9a48"/>
<path d="M416 747.8 L406.5 742.3 A11 11 0 0 1 425.5 742.3 Z" fill="#db4437"/>
<path d="M416 747.8 L425.5 742.3 A11 11 0 0 1 416 758.8 Z" fill="#fcc934"/>
<path d="M411.2 750.5 L416 758.8 L420.8 750.5 Z" fill="#1e9a48"/>
<path d="M420.8 750.5 L416 758.8 L425.5 753.3 Z" fill="#fcc934"/>
<path d="M406.5 742.3 L411.2 750.5 L416 747.8 Z" fill="#1e9a48"/>
<circle cx="416" cy="747.8" r="4.9" fill="#fff"/>
<circle cx="416" cy="747.8" r="3.9" fill="#4285f4"/>
<!-- cmd -->
<rect x="453.5" y="738.3" width="21.3" height="18.2" fill="#000" stroke="#bdbdbd" stroke-width="1"/>
<rect x="453.5" y="738.3" width="21.3" height="1.8" fill="#c8c8c8"/>
<text x="455.6" y="747.6" font-family="Liberation Sans" font-size="6.8" font-weight="bold" fill="#f0f0f0">C:</text><path d="M463.3 742.6 L466.3 747.3" stroke="#f0f0f0" stroke-width="1.1"/>
<rect x="466" y="746" width="6" height="1" fill="#e0e0e0"/>
<!-- people -->
<g fill="none" stroke="#fff" stroke-width="1.1">
<circle cx="823.9" cy="742.8" r="2.7"/>
<path d="M821.5 746.5 C823.5 745.2 827 745.5 828 748.5"/>
<circle cx="817.7" cy="748.3" r="2.7"/>
<path d="M814 754.8 C815.5 750.5 820.5 750.5 822 754.8"/>
</g>
<!-- speaker -->
<path d="M849.6 745.2 L851.5 745.2 L854.7 742.2 L854.7 753.9 L851.5 750.8 L849.6 750.8 Z" fill="none" stroke="#fff" stroke-width="1.1" stroke-linejoin="round"/>
<circle cx="860.8" cy="751.5" r="4.5" fill="#d42a38"/>
<path d="M858.6 749.3 L863 753.7 M863 749.3 L858.6 753.7" stroke="#fff" stroke-width="1"/>
<!-- notification -->
<path d="M983.6 740.6 L998.4 740.6 L998.4 752 L993.5 752 L991 754.8 L988.5 752 L983.6 752 Z" fill="none" stroke="#fff" stroke-width="1.1"/>
<rect x="1019" y="728" width="1" height="40" fill="#8a8a8a"/>
</svg>
<div class="t" style="left:0;top:713px">Безопасный режим</div>
<div class="t" style="left:916px;top:713px">Безопасный режим</div>
<div class="t" style="left:876.5px;top:741px;transform:scaleX(0.87);transform-origin:0 0">РУС</div>
<div class="t" style="left:924.5px;top:732px;transform:scaleX(0.88);transform-origin:0 0">16:29</div>
<div class="t" style="left:911px;top:750px;transform:scaleX(0.88);transform-origin:0 0">25.12.2018</div>

</body></html>
